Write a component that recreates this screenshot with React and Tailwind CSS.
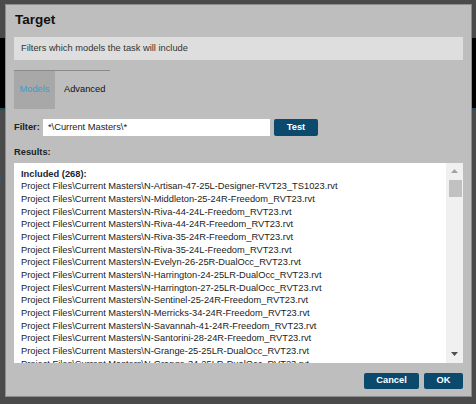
import React from 'react';

const FILES = [
  'N-Artisan-47-25L-Designer-RVT23_TS1023.rvt',
  'N-Middleton-25-24R-Freedom_RVT23.rvt',
  'N-Riva-44-24L-Freedom_RVT23.rvt',
  'N-Riva-44-24R-Freedom_RVT23.rvt',
  'N-Riva-35-24R-Freedom_RVT23.rvt',
  'N-Riva-35-24L-Freedom_RVT23.rvt',
  'N-Evelyn-26-25R-DualOcc_RVT23.rvt',
  'N-Harrington-24-25LR-DualOcc_RVT23.rvt',
  'N-Harrington-27-25LR-DualOcc_RVT23.rvt',
  'N-Sentinel-25-24R-Freedom_RVT23.rvt',
  'N-Merricks-34-24R-Freedom_RVT23.rvt',
  'N-Savannah-41-24R-Freedom_RVT23.rvt',
  'N-Santorini-28-24R-Freedom_RVT23.rvt',
  'N-Grange-25-25LR-DualOcc_RVT23.rvt',
  'N-Grange-34-25LR-DualOcc_RVT23.rvt',
  'N-Grange-31-25LR-DualOcc_RVT23.rvt',
];

export default function App() {
  return (
    <div className="relative w-[476px] h-[404px] overflow-hidden bg-[#4a4a4a] font-['Liberation_Sans',Arial,sans-serif]">
      {/* page behind the modal */}
      <div className="absolute left-0 right-0 top-[38px] h-[72px] bg-black border-b-2 border-[#1e4d63]" />
      <div className="absolute left-[-5px] top-[174px] text-[9px] leading-[12px] text-[#2d5b78]">
        <div>st</div>
        <div>n.</div>
      </div>

      {/* dialog */}
      <div className="absolute left-[5px] top-[4px] w-[467px] h-[393px] bg-[#bebebe] border border-[#8c8c8c] flex flex-col px-[8px] pt-[6px]">
        <h2 className="text-[13.5px] leading-[18px] font-bold text-[#111] pl-[1px]">Target</h2>

        <div className="mt-[8px] h-[23px] bg-[#dedede] px-[7px] flex items-center text-[9.3px] text-[#333]">
          Filters which models the task will include
        </div>

        {/* tabs */}
        <div className="mt-[10px] w-[96px] border-t border-[#8a8a8a] flex text-[9.3px]">
          <div className="w-[41px] h-[38px] bg-[#a8a8a8] flex items-center justify-center text-[#3c9ad6]">Models</div>
          <div className="h-[38px] flex items-center pl-[9px] text-[#111]">Advanced</div>
        </div>

        {/* filter row */}
        <div className="mt-[10px] h-[17px] flex items-center gap-[4px] text-[9.3px]">
          <span className="w-[25px] font-bold text-[#222]">Filter:</span>
          <div className="w-[227px] h-[17px] bg-white flex items-center pl-[5px] text-[#222]">*\Current Masters\*</div>
          <button className="w-[44px] h-[17px] rounded-[2px] bg-[#0b4a6d] text-white font-bold">Test</button>
        </div>

        <div className="mt-[10px] text-[9.3px] leading-[12.67px] font-bold text-[#222]">Results:</div>

        {/* results list */}
        <div className="mt-[4px] h-[200px] bg-white flex">
          <div className="flex-1 overflow-hidden pl-[7px] pt-[5px] text-[9.3px] leading-[12.67px] text-[#222] whitespace-nowrap">
            <div className="font-bold text-[#1b2433]">Included (268):</div>
            {FILES.map((f) => (
              <div key={f}>Project Files\Current Masters\{f}</div>
            ))}
          </div>
          <div className="w-[17px] bg-[#f0f0f0] flex flex-col items-center">
            <div className="h-[17px] w-full flex items-center justify-center">
              <svg width="7" height="4" viewBox="0 0 7 4"><path d="M3.5 0L7 4H0z" fill="#a3a3a3" /></svg>
            </div>
            <div className="w-[13px] h-[17px] bg-[#c1c1c1] ml-[1px]" />
            <div className="flex-1" />
            <div className="h-[17px] w-full flex items-center justify-center">
              <svg width="7" height="4" viewBox="0 0 7 4"><path d="M0 0H7L3.5 4z" fill="#505050" /></svg>
            </div>
          </div>
        </div>

        {/* footer buttons */}
        <div className="mt-[10px] flex justify-end gap-[5px] text-[9.3px] font-bold text-white">
          <button className="w-[55px] h-[16px] rounded-[2px] bg-[#0b4a6d]">Cancel</button>
          <button className="w-[39px] h-[16px] rounded-[2px] bg-[#0b4a6d]">OK</button>
        </div>
      </div>
    </div>
  );
}
